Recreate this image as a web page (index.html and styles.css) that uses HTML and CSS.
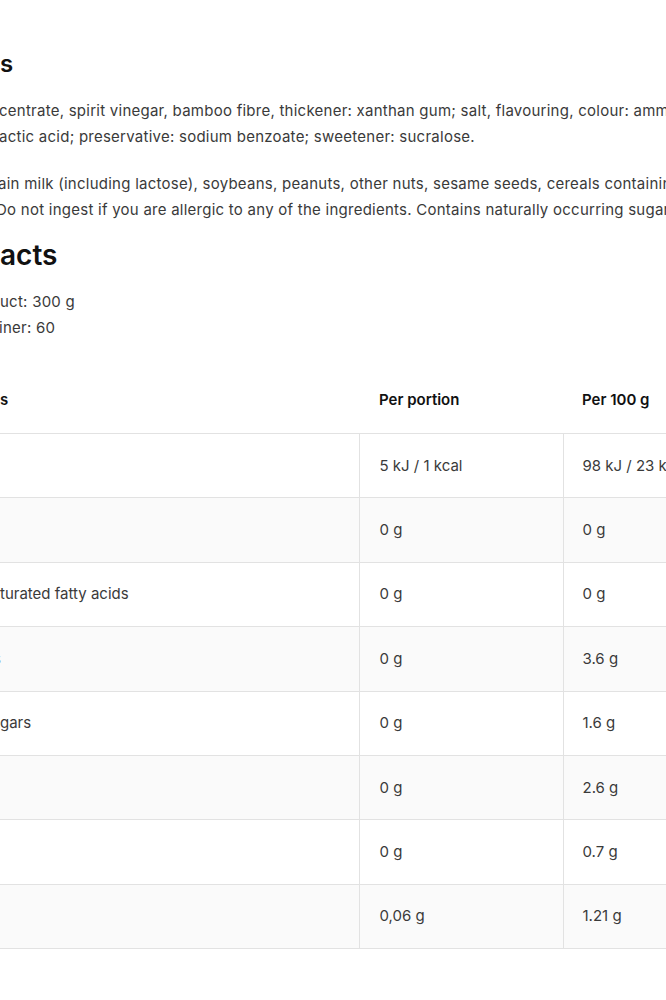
FILE: index.html
```html
<!DOCTYPE html>
<html>
<head>
    <meta charset="UTF-8">
    <title>Ingredients &amp; Nutrition Facts</title>
    <link rel="stylesheet" href="styles.css">
</head>
<body>

<main class="page">

    <section class="block">
        <h2 class="title title-small">s</h2>

        <p class="text">
            <span class="line cut-1">centrate, spirit vinegar, bamboo fibre, thickener: xanthan gum; salt, flavouring, colour: ammonia</span>
            <span class="line cut-1">actic acid; preservative: sodium benzoate; sweetener: sucralose.</span>
        </p>

        <p class="text text-last">
            <span class="line cut-2">ain milk (including lactose), soybeans, peanuts, other nuts, sesame seeds, cereals containing</span>
            <span class="line cut-3">Do not ingest if you are allergic to any of the ingredients. Contains naturally occurring sugars.</span>
        </p>
    </section>

    <section class="block">
        <h2 class="title">acts</h2>

        <p class="text">
            <span class="line">uct: 300 g</span>
            <span class="line cut-1">iner: 60</span>
        </p>

        <table class="facts">
            <thead>
                <tr>
                    <th class="name">s</th>
                    <th>Per portion</th>
                    <th>Per 100 g</th>
                </tr>
            </thead>
            <tbody>
                <tr>
                    <td class="name"></td>
                    <td>5 kJ / 1 kcal</td>
                    <td>98 kJ / 23 kcal</td>
                </tr>
                <tr>
                    <td class="name"></td>
                    <td>0 g</td>
                    <td>0 g</td>
                </tr>
                <tr>
                    <td class="name">turated fatty acids</td>
                    <td>0 g</td>
                    <td>0 g</td>
                </tr>
                <tr>
                    <td class="name"><span class="sliver">s</span></td>
                    <td>0 g</td>
                    <td>3.6 g</td>
                </tr>
                <tr>
                    <td class="name">gars</td>
                    <td>0 g</td>
                    <td>1.6 g</td>
                </tr>
                <tr>
                    <td class="name"></td>
                    <td>0 g</td>
                    <td>2.6 g</td>
                </tr>
                <tr>
                    <td class="name"></td>
                    <td>0 g</td>
                    <td>0.7 g</td>
                </tr>
                <tr>
                    <td class="name"></td>
                    <td>0,06 g</td>
                    <td>1.21 g</td>
                </tr>
            </tbody>
        </table>
    </section>

</main>

</body>
</html>
```

FILE: styles.css
```css
body {
    margin: 0;
    background-color: #fff;
    font-family: Inter, "Open Sans", sans-serif;
    color: #3a3a3a;
    overflow: hidden;
}

.page {
    padding-top: 46px;
    width: 900px;
}

.title {
    margin: 0 0 16px 0;
    font-size: 28px;
    line-height: 36px;
    font-weight: 600;
    color: #111;
}

.title-small {
    font-size: 24px;
    line-height: 36px;
    margin-bottom: 16px;
}

.text {
    margin: 0 0 21px 0;
    font-size: 15px;
    line-height: 26px;
    letter-spacing: 0.25px;
}

.text-last {
    margin-bottom: 14px;
}

.line {
    display: block;
    white-space: nowrap;
}

/* letters cut by the left edge */
.cut-1 {
    margin-left: -1px;
}

.cut-2 {
    margin-left: -2px;
}

.cut-3 {
    margin-left: -4px;
}

.facts {
    border-collapse: collapse;
    width: 780px;
    font-size: 15px;
    margin-top: 25px;
}

.facts th {
    text-align: left;
    font-weight: 600;
    color: #111;
    padding: 23px 20px 22px 20px;
    line-height: 22px;
    border-bottom: 1px solid #e2e2e2;
}

.facts td {
    padding: 20.5px 19px 20.5px 20px;
    line-height: 22.4px;
    border-bottom: 1px solid #e2e2e2;
    border-left: 1px solid #e2e2e2;
    white-space: nowrap;
}

.facts tbody tr:nth-child(even) {
    background-color: #fafafa;
}

.facts .name {
    width: 359px;
    padding-left: 0;
    box-sizing: border-box;
}

.facts td.name {
    border-left: none;
}

.facts th:nth-child(2),
.facts td:nth-child(2) {
    width: 204px;
    box-sizing: border-box;
}

.facts th:nth-child(3),
.facts td:nth-child(3) {
    padding-left: 19px;
}

.sliver {
    margin-left: -7px;
}
```
